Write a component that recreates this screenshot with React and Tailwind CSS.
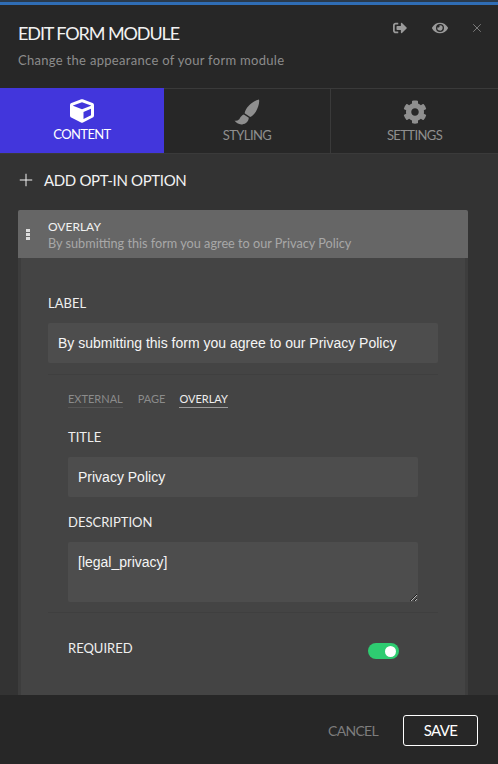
import React from 'react'
import { FaCube, FaCog, FaEye, FaSignOutAlt } from 'react-icons/fa'
import { X, Plus } from 'lucide-react'

const BrushIcon = () => (
    <svg viewBox="0 0 26 26" className="w-[26px] h-[26px]" fill="currentColor">
        <path d="M25 0.5c0.8 3.5-1 8.8-3.2 12.2-1.6 2.5-3.6 4.6-5.6 5.3l-5.6-3.8c0.5-2.6 2-5.4 4.4-7.8C17.6 3.6 21.6 1.2 25 0.5z" />
        <path d="M9.8 15.4l5 3.4c-0.2 3.4-2.7 6.2-6.6 6.6-3.2 0.3-6.2-1.2-7.7-3.8 1.6 0.5 3.2 0.2 4.4-1 1.3-1.4 1.6-3.8 4.9-5.2z" />
    </svg>
)

const Tab = ({ icon, label, active, className }) => {
    return (
        <div className={`h-[65px] flex flex-col items-center pt-[10px] ${active ? 'bg-[#4236dc] text-white' : 'text-[#8f8f8f] border-t border-[#3a3a3a]'} ${className}`}>
            <div className="h-[25px] flex items-center justify-center text-[24px]">{icon}</div>
            <span className="mt-[1px] text-[13px] leading-[20px] tracking-[-0.6px]">{label}</span>
        </div>
    )
}

const App = () => {
    return (
        <div className="w-[498px] h-[764px] flex flex-col overflow-hidden bg-[#333333] font-['Lato','Noto_Sans',sans-serif] text-white">
            <div className="h-[5px] bg-[#2f6db5] border-t-2 border-[#2a3a4c] shrink-0"></div>
            <div className="h-[83px] bg-[#272727] flex justify-between pl-[18px] pr-[14px] shrink-0">
                <div className="pt-[17px]">
                    <h1 className="text-[18px] leading-[22px] tracking-[-1.1px] text-[#f2f2f2]">EDIT FORM MODULE</h1>
                    <p className="mt-[7px] text-[13px] leading-[18px] tracking-[0.3px] text-[#8c8c8c]">Change the appearance of your form module</p>
                </div>
                <div className="flex items-start pt-[16px] text-[#9a9a9a]">
                    <FaSignOutAlt className="w-[14px] h-[14px]" />
                    <FaEye className="w-[16px] h-[16px] ml-[25px] -mt-[1px]" />
                    <X className="w-[14px] h-[14px] ml-[22px]" strokeWidth={1.25} />
                </div>
            </div>
            <div className="flex bg-[#272727] shrink-0 border-[#3a3a3a] border-b">
                <Tab active icon={<FaCube />} label="CONTENT" className="w-[164px]" />
                <Tab icon={<BrushIcon />} label="STYLING" className="w-[167px] border-r" />
                <Tab icon={<FaCog />} label="SETTINGS" className="flex-1" />
            </div>
            <div className="flex-1 min-h-0 overflow-hidden pl-[18px] pr-[30px]">
                <div className="h-[56px] flex items-center pb-[5px] text-[#f2f2f2]">
                    <Plus className="w-[20px] h-[20px] -ml-[2px]" strokeWidth={1.2} />
                    <span className="ml-[8px] text-[15px] leading-[20px] tracking-[-0.35px]">ADD OPT-IN OPTION</span>
                </div>
                <div className="bg-[#444444] border-x-[3px] border-[#3d3d3d] rounded-t-[2px]">
                    <div className="-mx-[3px] h-[48px] bg-[#666666] rounded-t-[2px] flex">
                        <div className="w-[20px] mr-[10px] flex flex-col items-center justify-center gap-[1px]">
                            <span className="w-[4px] h-[3px] bg-[#dddddd]"></span>
                            <span className="w-[4px] h-[3px] bg-[#dddddd]"></span>
                            <span className="w-[4px] h-[3px] bg-[#dddddd]"></span>
                        </div>
                        <div className="pt-[8px]">
                            <div className="text-[12px] leading-[17px] text-[#f2f2f2]">OVERLAY</div>
                            <div className="text-[12.7px] leading-[17px] text-[#a8a8a8]">By submitting this form you agree to our Privacy Policy</div>
                        </div>
                    </div>
                    <div className="px-[27px] pt-[36px] pb-[40px]">
                        <label className="block text-[13px] leading-[18px] text-[#efefef]">LABEL</label>
                        <input readOnly value="By submitting this form you agree to our Privacy Policy" className="mt-[11px] block w-full h-[40px] px-[10px] bg-[#4d4d4d] rounded-[2px] outline-none font-['Liberation_Sans',sans-serif] text-[14px] text-[#f5f5f5]" />
                        <div className="mt-[11px] border-t border-[#3f3f3f] px-[20px]">
                            <div className="pt-[17px] flex gap-[15px] text-[11px] leading-[14px]">
                                <span className="text-[#8b8b8b] border-b border-[#555555] pb-[1px]">EXTERNAL</span>
                                <span className="text-[#8b8b8b]">PAGE</span>
                                <span className="text-[#eeeeee] border-b border-[#9a9a9a] pb-[1px] -ml-[1px]">OVERLAY</span>
                            </div>
                            <label className="block mt-[20px] text-[13px] leading-[18px] text-[#efefef]">TITLE</label>
                            <input readOnly value="Privacy Policy" className="mt-[11px] block w-full h-[40px] px-[10px] bg-[#4d4d4d] rounded-[2px] outline-none font-['Liberation_Sans',sans-serif] text-[14px] text-[#f5f5f5]" />
                            <label className="block mt-[16px] text-[13px] leading-[18px] text-[#efefef]">DESCRIPTION</label>
                            <textarea readOnly value="[legal_privacy]" className="mt-[11px] block w-full h-[60px] px-[10px] py-[11px] bg-[#4d4d4d] rounded-[2px] outline-none resize-y font-['Liberation_Sans',sans-serif] text-[14px] leading-[18px] text-[#f5f5f5]" />
                        </div>
                        <div className="mt-[10px] border-t border-[#3f3f3f] px-[20px] pt-[26px] flex justify-between">
                            <span className="text-[13px] leading-[18px] text-[#efefef]">REQUIRED</span>
                            <div className="mt-[4px] mr-[19px] w-[31px] h-[16px] rounded-full bg-[#2ecc71] flex items-center justify-end pr-[3px]">
                                <span className="w-[11px] h-[11px] rounded-full bg-white"></span>
                            </div>
                        </div>
                    </div>
                </div>
            </div>
            <div className="h-[69px] bg-[#272727] shrink-0 flex items-center justify-end pr-[20px] pt-[2px]">
                <span className="text-[14px] tracking-[-0.7px] mr-[1px] text-[#7d7d7d]">CANCEL</span>
                <button className="ml-[24px] w-[75px] h-[31px] border border-white rounded-[3px] text-[15px] tracking-[-0.7px] text-white">SAVE</button>
            </div>
        </div>
    )
}

export default App
